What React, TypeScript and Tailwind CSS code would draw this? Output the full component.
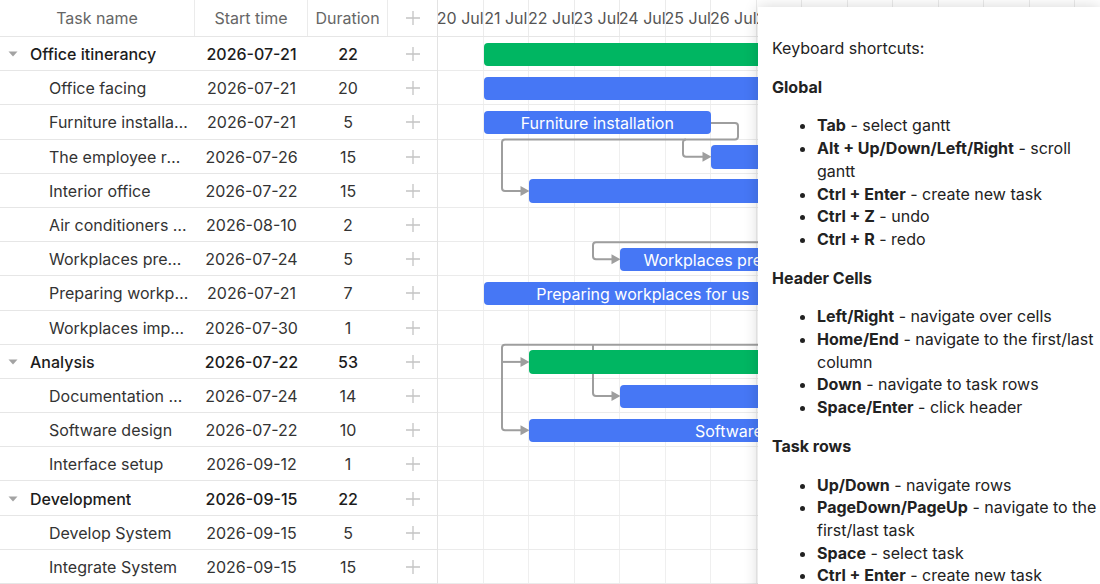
import React from 'react'

type Task = {
  name: string
  start: string
  duration: number
  day: number
  group?: boolean
}

const tasks: Task[] = [
  { name: 'Office itinerancy', start: '2026-07-21', duration: 22, day: 1, group: true },
  { name: 'Office facing', start: '2026-07-21', duration: 20, day: 1 },
  { name: 'Furniture installation', start: '2026-07-21', duration: 5, day: 1 },
  { name: 'The employee relocation', start: '2026-07-26', duration: 15, day: 6 },
  { name: 'Interior office', start: '2026-07-22', duration: 15, day: 2 },
  { name: 'Air conditioners installation', start: '2026-08-10', duration: 2, day: 21 },
  { name: 'Workplaces preparation', start: '2026-07-24', duration: 5, day: 4 },
  { name: 'Preparing workplaces for us', start: '2026-07-21', duration: 7, day: 1 },
  { name: 'Workplaces importation', start: '2026-07-30', duration: 1, day: 10 },
  { name: 'Analysis', start: '2026-07-22', duration: 53, day: 2, group: true },
  { name: 'Documentation creation', start: '2026-07-24', duration: 14, day: 4 },
  { name: 'Software design', start: '2026-07-22', duration: 10, day: 2 },
  { name: 'Interface setup', start: '2026-09-12', duration: 1, day: 54 },
  { name: 'Development', start: '2026-09-15', duration: 22, day: 57, group: true },
  { name: 'Develop System', start: '2026-09-15', duration: 5, day: 57 },
  { name: 'Integrate System', start: '2026-09-15', duration: 15, day: 57 },
]

const days = ['20 Jul', '21 Jul', '22 Jul', '23 Jul', '24 Jul', '25 Jul', '26 Jul', '27 Jul', '28 Jul', '29 Jul', '30 Jul', '31 Jul', '1 Aug', '2 Aug', '3 Aug']

const DAY = 45.5
const ROW = 34.2

const PlusIcon = () => (
  <svg width="16" height="16" viewBox="0 0 16 16" className="text-[#c4c4c4]">
    <path d="M8 1v14M1 8h14" stroke="currentColor" strokeWidth="1.3" fill="none" />
  </svg>
)

const Caret = () => (
  <svg width="10" height="6" viewBox="0 0 10 6" className="text-[#a3a3a3]">
    <path d="M0.5 0.5h9L5 5.5z" fill="currentColor" />
  </svg>
)

const shortcuts = [
  {
    title: 'Global',
    items: [
      ['Tab', 'select gantt'],
      ['Alt + Up/Down/Left/Right', 'scroll gantt'],
      ['Ctrl + Enter', 'create new task'],
      ['Ctrl + Z', 'undo'],
      ['Ctrl + R', 'redo'],
    ],
  },
  {
    title: 'Header Cells',
    items: [
      ['Left/Right', 'navigate over cells'],
      ['Home/End', 'navigate to the first/last column'],
      ['Down', 'navigate to task rows'],
      ['Space/Enter', 'click header'],
    ],
  },
  {
    title: 'Task rows',
    items: [
      ['Up/Down', 'navigate rows'],
      ['PageDown/PageUp', 'navigate to the first/last task'],
      ['Space', 'select task'],
      ['Ctrl + Enter', 'create new task'],
      ['Ctrl + Z', 'undo'],
    ],
  },
]

const Arrow = ({ x, y }: { x: number; y: number }) => (
  <path d={`M${x} ${y} L${x - 9} ${y - 5} L${x - 9} ${y + 5} Z`} fill="#9e9e9e" />
)

const Links = () => (
  <svg
    className="absolute left-0 top-0"
    width="662"
    height="547"
    viewBox="438 37 662 547"
    fill="none"
  >
    <g stroke="#9e9e9e" strokeWidth="2" strokeLinejoin="round">
      <path d="M711 123 H735 Q738 123 738 126 V136.6 Q738 139.6 735 139.6 H686 Q683 139.6 683 142.6 V153.7 Q683 156.7 686 156.7 H703" />
      <path d="M686 139.6 H505 Q502 139.6 502 142.6 V187.9 Q502 190.9 505 190.9 H521" />
      <path d="M860 242.2 H596 Q593 242.2 593 245.2 V256.3 Q593 259.3 596 259.3 H612" />
      <path d="M860 344.8 H505 Q502 344.8 502 347.8 V427.3 Q502 430.3 505 430.3 H521" />
      <path d="M502 361.9 H521" />
      <path d="M593 344.8 V393.1 Q593 396.1 596 396.1 H612" />
    </g>
    <Arrow x={711.5} y={156.7} />
    <Arrow x={529.5} y={190.9} />
    <Arrow x={620.5} y={259.3} />
    <Arrow x={529.5} y={361.9} />
    <Arrow x={620.5} y={396.1} />
    <Arrow x={529.5} y={430.3} />
  </svg>
)

export default function App() {
  return (
    <div className="relative w-[1100px] h-[584px] overflow-hidden bg-white font-['Inter',sans-serif] text-[16px]">
      <div className="flex h-full">
        {/* grid */}
        <div className="w-[438px] shrink-0 border-r border-[#e3e3e3] flex flex-col">
          <div className="flex h-[37px] shrink-0 border-b border-[#e6e6e6] text-[#666]">
            <div className="w-[195px] border-r border-[#ebebeb] flex items-center justify-center">Task name</div>
            <div className="w-[113px] border-r border-[#ebebeb] flex items-center justify-center">Start time</div>
            <div className="w-[80px] border-r border-[#ebebeb] flex items-center justify-center">Duration</div>
            <div className="flex-1 flex items-center justify-center">
              <PlusIcon />
            </div>
          </div>
          {tasks.map((t) => (
            <div
              key={t.name}
              className={`flex h-[34.2px] shrink-0 border-b border-[#e6e6e6] pt-[1px] ${
                t.group ? 'font-medium text-[#1c1c1c]' : 'text-[#333]'
              }`}
            >
              <div className="w-[195px] flex items-center min-w-0 pr-[6px]">
                {t.group ? (
                  <>
                    <span className="w-[30px] shrink-0 flex justify-center pl-[2px] pr-[6px]">
                      <Caret />
                    </span>
                    <span className="truncate">{t.name}</span>
                  </>
                ) : (
                  <span className="truncate pl-[49px]">{t.name}</span>
                )}
              </div>
              <div className="w-[113px] flex items-center justify-center">{t.start}</div>
              <div className="w-[80px] flex items-center justify-center">{t.duration}</div>
              <div className="flex-1 flex items-center justify-center">
                <PlusIcon />
              </div>
            </div>
          ))}
        </div>

        {/* chart */}
        <div className="flex-1 flex flex-col min-w-0 overflow-hidden">
          <div className="flex h-[37px] shrink-0 border-b border-[#e6e6e6] text-[#555]">
            {days.map((d) => (
              <div
                key={d}
                className="w-[45.5px] shrink-0 border-r border-[#ebebeb] flex items-center justify-center overflow-hidden whitespace-nowrap"
              >
                {d}
              </div>
            ))}
          </div>
          <div className="relative flex-1">
            <div className="flex h-full">
              {days.map((d) => (
                <div key={d} className="w-[45.5px] shrink-0 border-r border-[#efefef] h-full" />
              ))}
            </div>
            <div className="absolute inset-0 flex flex-col">
              {tasks.map((t) => (
                <div key={t.name} className="h-[34.2px] shrink-0 border-b border-[#ebebeb]" />
              ))}
            </div>
            <Links />
            {tasks.map((t, i) => (
              <div
                key={t.name}
                className={`absolute h-[23.4px] rounded-[4px] flex items-center justify-center whitespace-nowrap overflow-hidden text-white ${
                  t.group ? 'bg-[#00b662]' : 'bg-[#4677f5]'
                }`}
                style={{ left: t.day * DAY, top: i * ROW + 5.6, width: t.duration * DAY }}
              >
                {t.group ? '' : t.name}
              </div>
            ))}
          </div>
        </div>
      </div>

      {/* keyboard shortcuts popup */}
      <div className="absolute left-[758px] top-[7px] w-[342px] h-[600px] bg-white pl-[14px] pt-[14px] text-[#222] leading-[22.7px] shadow-[0_0_14px_rgba(0,0,0,0.16)]">
        <p className="my-4">Keyboard shortcuts:</p>
        {shortcuts.map((s) => (
          <div key={s.title}>
            <p className="my-4 font-bold">{s.title}</p>
            <ul className="my-4 list-disc pl-[45px]">
              {s.items.map(([k, v]) => (
                <li key={k + v}>
                  <b className="font-bold">{k}</b> - {v}
                </li>
              ))}
            </ul>
          </div>
        ))}
      </div>
    </div>
  )
}
